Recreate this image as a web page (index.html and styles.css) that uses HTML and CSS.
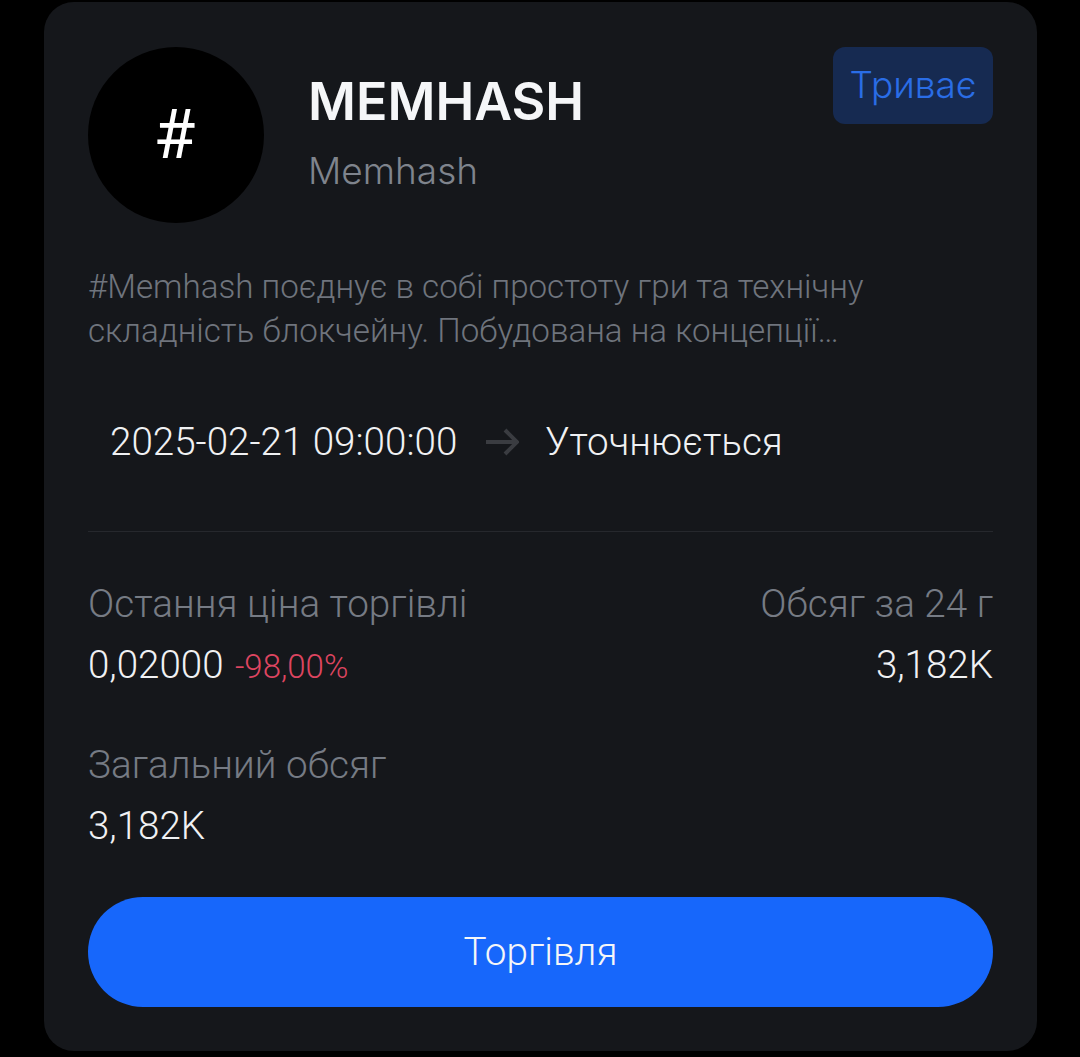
FILE: index.html
```html
<!DOCTYPE html>
<html lang="uk">
  <head>
    <meta charset="UTF-8" />
    <title>Memhash</title>
    <link rel="stylesheet" href="styles.css">
  </head>
  <body>
    <div class="card">
      <div class="head">
        <div class="logo">#</div>
        <div class="names">
          <div class="symbol">MEMHASH</div>
          <div class="name">Memhash</div>
        </div>
        <div class="status">Триває</div>
      </div>

      <p class="desc">#Memhash поєднує в собі простоту гри та технічну складність блокчейну. Побудована на концепції…</p>

      <div class="dates">
        <span>2025-02-21 09:00:00</span>
        <svg class="arrow" width="34" height="28" viewBox="0 0 34 28" fill="none" stroke="#3a3c41" stroke-width="4">
          <path d="M1 14H32M20 2L32 14L20 26" />
        </svg>
        <span>Уточнюється</span>
      </div>

      <div class="line"></div>

      <div class="stats">
        <div class="stat">
          <div class="label">Остання ціна торгівлі</div>
          <div class="value">0,02000 <span class="change">-98,00%</span></div>
        </div>
        <div class="stat right">
          <div class="label">Обсяг за 24 г</div>
          <div class="value">3,182K</div>
        </div>
        <div class="stat">
          <div class="label">Загальний обсяг</div>
          <div class="value">3,182K</div>
        </div>
      </div>

      <button class="trade" type="button">Торгівля</button>
    </div>
  </body>
</html>
```

FILE: styles.css
```css
body {
  margin: 0;
  background-color: #000;
  font-family: "Inter", "Roboto", sans-serif;
}

.card {
  box-sizing: border-box;
  width: 993px;
  height: 1049px;
  margin: 2px 0 0 44px;
  padding: 45px 44px 44px;
  background-color: #15171b;
  border-radius: 30px;
}

.head {
  display: flex;
  align-items: flex-start;
}

.logo {
  box-sizing: border-box;
  width: 176px;
  height: 176px;
  flex-shrink: 0;
  display: flex;
  align-items: center;
  justify-content: center;
  padding-right: 3px;
  border-radius: 50%;
  background-color: #000;
  color: #fff;
  font-family: "Roboto", sans-serif;
  font-size: 68px;
  font-weight: 400;
}

.names {
  flex: 1;
  margin-left: 44px;
  padding-top: 20px;
}

.symbol {
  color: #f5f6f8;
  font-size: 52px;
  font-weight: 600;
  line-height: 70px;
}

.name {
  margin-top: 1px;
  color: #7f848d;
  font-size: 37px;
  font-weight: 300;
  line-height: 66px;
}

.status {
  width: 160px;
  height: 77px;
  display: flex;
  align-items: center;
  justify-content: center;
  padding-bottom: 2px;
  box-sizing: border-box;
  border-radius: 12px;
  background-color: #162a51;
  color: #2a6de6;
  font-size: 37px;
  font-weight: 300;
}

.desc {
  margin: 42px 0 0;
  color: #6f747d;
  font-family: "Roboto", sans-serif;
  font-size: 33.15px;
  font-weight: 300;
  line-height: 44px;
}

.dates {
  display: flex;
  align-items: center;
  margin: 65px 0 0 22px;
  color: #f0f1f3;
  font-family: "Roboto", sans-serif;
  font-size: 38.6px;
  font-weight: 300;
  line-height: 48px;
}

.arrow {
  margin: 0 26px 0 28px;
}

.line {
  height: 1px;
  margin-top: 65px;
  background-color: #26282d;
}

.stats {
  display: grid;
  grid-template-columns: 1fr 1fr;
  row-gap: 49px;
  margin-top: 47px;
}

.right {
  text-align: right;
}

.label {
  color: #767b84;
  font-family: "Roboto", sans-serif;
  font-size: 38.7px;
  font-weight: 300;
  line-height: 50px;
}

.value {
  margin-top: 12px;
  color: #f0f1f3;
  font-family: "Roboto", sans-serif;
  font-size: 38.5px;
  font-weight: 300;
  line-height: 48px;
}

.change {
  margin-left: 2px;
  color: #dd4560;
  font-size: 33px;
}

.trade {
  display: block;
  width: 100%;
  height: 110px;
  margin-top: 47px;
  padding: 0 0 2px;
  border: none;
  border-radius: 55px;
  background-color: #1767fb;
  color: #f5f6f8;
  font-family: "Roboto", sans-serif;
  font-size: 38.7px;
  font-weight: 300;
}
```
